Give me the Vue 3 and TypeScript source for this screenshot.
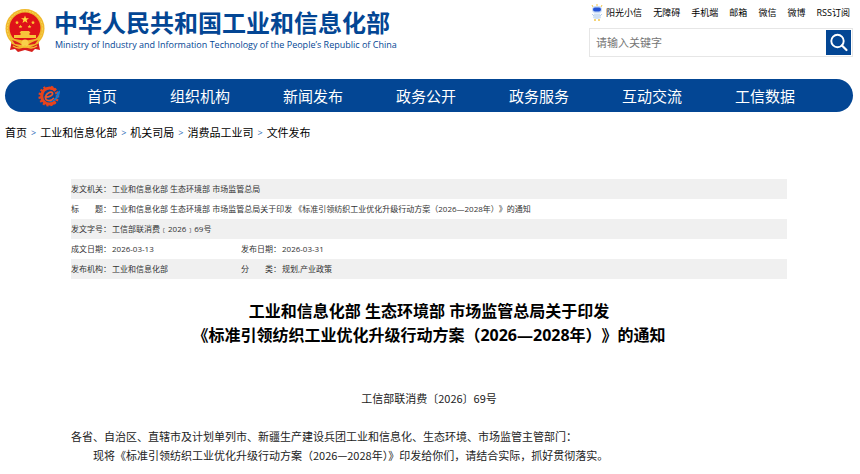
<script setup lang="ts">
interface InfoCell {
  label: string
  value: string
}

const quickLinks: string[] = ['阳光小信', '无障碍', '手机端', '邮箱', '微信', '微博', 'RSS订阅']
const navItems: string[] = ['首页', '组织机构', '新闻发布', '政务公开', '政务服务', '互动交流', '工信数据']
const crumbs: string[] = ['首页', '工业和信息化部', '机关司局', '消费品工业司', '文件发布']
const infoRows: InfoCell[][] = [
  [{ label: '发文机关：', value: '工业和信息化部 生态环境部 市场监管总局' }],
  [
    {
      label: '标　　题：',
      value: '工业和信息化部 生态环境部 市场监管总局关于印发 《标准引领纺织工业优化升级行动方案（2026—2028年）》的通知',
    },
  ],
  [{ label: '发文字号：', value: '工信部联消费﹝2026﹞69号' }],
  [
    { label: '成文日期：', value: '2026-03-13' },
    { label: '发布日期：', value: '2026-03-31' },
  ],
  [
    { label: '发布机构：', value: '工业和信息化部' },
    { label: '分　　类：', value: '规划,产业政策' },
  ],
]
const gearTeeth: number[] = Array.from({ length: 14 }, (_, i) => 20 + i * 24)
</script>

<template>
  <div class="page">
    <header class="header">
      <a class="brand" href="#">
        <svg class="emblem" viewBox="0 0 40 44" aria-hidden="true">
          <path d="M7 31 L5 41 L10 40 L13 43 L20 41 L27 43 L30 40 L35 41 L33 31 Z" fill="#d8201c" />
          <circle cx="20" cy="19.500" r="19.500" fill="#f0b92c" />
          <circle cx="20" cy="19.500" r="17.600" fill="none" stroke="#f9d85c" stroke-width="1" stroke-dasharray="2 1.200" />
          <circle cx="20" cy="19" r="15.500" fill="#df1219" />
          <path d="M20 6.500 L21 9.300 H24 L21.600 11.100 L22.500 14 L20 12.200 L17.500 14 L18.400 11.100 L16 9.300 H19 Z" fill="#ffdc3c" />
          <g fill="#fbc934">
            <path d="M12 11.500l.6 1.300 1.400.1-1.100.9.4 1.400-1.300-.8-1.200.8.300-1.400-1.100-.9 1.400-.1z" />
            <path d="M28 11.500l.6 1.300 1.400.1-1.100.9.4 1.400-1.300-.8-1.200.8.300-1.400-1.100-.9 1.400-.1z" />
            <path d="M15.500 15.800l.6 1.200 1.300.1-1 .9.3 1.300-1.200-.7-1.200.7.300-1.300-1-.9 1.300-.1z" />
            <path d="M24.500 15.800l.6 1.200 1.300.1-1 .9.3 1.300-1.200-.7-1.200.7.300-1.300-1-.9 1.300-.1z" />
          </g>
          <path d="M14.500 24 L16 22 H24 L25.500 24 L24.500 24 V26 H31 V29 H9 V26 H15.500 V24 Z" fill="#f7c33a" />
          <path d="M5 28 Q12 32 20 31 Q28 32 35 28 L33 35 Q26 38 20 36 Q14 38 7 35 Z" fill="#f0b92c" />
          <path d="M7 31 Q14 33 17 36 L10 35 Z M33 31 Q26 33 23 36 L30 35 Z" fill="#d8201c" />
          <circle cx="20" cy="34" r="3.500" fill="#f9d04a" />
          <path d="M8 37 Q14 41 20 37 Q26 41 32 37" fill="none" stroke="#f5c233" stroke-width="1.500" />
        </svg>
        <span class="brand-text">
          <span class="brand-name">中华人民共和国工业和信息化部</span>
          <span class="brand-sub">Ministry of Industry and Information Technology of the People’s Republic of China</span>
        </span>
      </a>

      <div class="tools">
        <div class="quick">
          <svg class="robot" viewBox="0 0 12 18" aria-hidden="true">
            <path d="M2 3 L1 1 M10 3 L11 1 M6 2 V0" stroke="#f2c64a" stroke-width="1" />
            <rect x="1" y="2" width="10" height="7" rx="3.500" fill="#c9dcf5" />
            <rect x="2" y="3.500" width="8" height="4" rx="2" fill="#2453d6" />
            <path d="M3 9.500 H9 L10 14 Q6 16 2 14 Z" fill="#cfe0f3" />
            <path d="M1 10 L3 12 M11 10 L9 12" stroke="#b5cdee" stroke-width="1" />
            <path d="M4 15 V17 M8 15 V17" stroke="#f2c64a" stroke-width="1.500" />
          </svg>
          <a v-for="link in quickLinks" :key="link" href="#">{{ link }}</a>
        </div>
        <form class="search" @submit.prevent>
          <input type="text" placeholder="请输入关键字" aria-label="请输入关键字" />
          <button type="submit" aria-label="搜索">
            <svg viewBox="0 0 25 25" aria-hidden="true">
              <circle cx="11.500" cy="11" r="6.200" fill="none" stroke="#fff" stroke-width="1.900" />
              <path d="M16 15.500 L20.500 20" stroke="#fff" stroke-width="2.200" stroke-linecap="round" />
            </svg>
          </button>
        </form>
      </div>
    </header>

    <nav class="nav">
      <svg class="gear" viewBox="0 0 24 22" aria-hidden="true">
        <g fill="#e8431c">
          <rect v-for="angle in gearTeeth" :key="angle" x="9.700" y="0.600" width="2.200" height="3.500" :transform="`rotate(${angle} 10.800 11)`" />
        </g>
        <path d="M17.500 5.500 A8 8 0 1 0 17.500 16.500" fill="none" stroke="#e8431c" stroke-width="3" />
        <path d="M9 16 C15 17 19.500 12.500 18.500 8 L22 5.500 C22.500 12 16 19.500 9 16 Z" fill="#1679cf" />
        <path d="M6.500 12 C11 12.500 15.500 10 14.500 8 C13 5.500 7.500 9 7.500 12.500 C7.500 16.500 13 16.500 16 13" fill="none" stroke="#f0562a" stroke-width="1.600" />
      </svg>
      <a v-for="item in navItems" :key="item" href="#">{{ item }}</a>
    </nav>

    <div class="crumbs">
      <template v-for="(crumb, i) in crumbs" :key="crumb">
        <span v-if="i > 0" class="sep">&gt;</span>
        <a href="#">{{ crumb }}</a>
      </template>
    </div>

    <main class="article">
      <table class="info">
        <colgroup>
          <col class="col-label" />
          <col class="col-value" />
          <col class="col-label" />
          <col />
        </colgroup>
        <tbody>
          <tr v-for="(row, r) in infoRows" :key="r">
            <template v-for="cell in row" :key="cell.label">
              <th scope="row">{{ cell.label }}</th>
              <td :colspan="row.length === 1 ? 3 : 1">{{ cell.value }}</td>
            </template>
          </tr>
        </tbody>
      </table>

      <h1>工业和信息化部 生态环境部 市场监管总局关于印发<br />《标准引领纺织工业优化升级行动方案（2026—2028年）》的通知</h1>

      <div class="body">
        <p class="number">工信部联消费〔2026〕69号</p>
        <p>各省、自治区、直辖市及计划单列市、新疆生产建设兵团工业和信息化、生态环境、市场监管主管部门：</p>
        <p class="indent">现将《标准引领纺织工业优化升级行动方案（2026—2028年）》印发给你们，请结合实际，抓好贯彻落实。</p>
      </div>
    </main>
  </div>
</template>

<style>
body {
  margin: 0;
  background: #fff;
}
</style>

<style scoped>
.page {
  padding: 0 7px 0 5px;
  color: #000;
  font-family: 'Open Sans', 'Noto Sans CJK SC', sans-serif;
}

a {
  color: inherit;
  text-decoration: none;
}

.header {
  display: flex;
  justify-content: space-between;
  align-items: flex-start;
  height: 79px;
}

.brand {
  display: flex;
  gap: 9px;
  padding-top: 9px;
  color: #034694;
}

.emblem {
  width: 40px;
  height: 44px;
}

.brand-text {
  display: flex;
  flex-direction: column;
  white-space: nowrap;
}

.brand-name {
  font-family: 'Liberation Sans', 'Noto Sans CJK SC', sans-serif;
  font-size: 24px;
  line-height: 30px;
  font-weight: 700;
}

.brand-sub {
  padding-left: 1px;
  font-size: 9px;
  line-height: 12px;
}

.tools {
  width: 264px;
}

.quick {
  display: flex;
  align-items: center;
  justify-content: space-between;
  height: 25px;
  padding: 0 3px 0 2px;
  font-size: 9px;
  white-space: nowrap;
}

.robot {
  width: 12px;
  height: 18px;
  margin-right: -8px;
}

.search {
  display: flex;
  box-sizing: border-box;
  height: 29px;
  margin-top: 3px;
  padding: 1px;
  border: 1px solid #e6e6e6;
}

.search input {
  flex: 1;
  min-width: 0;
  padding: 0 5px;
  border: 0;
  outline: 0;
  background: none;
  color: #333;
  font-family: inherit;
  font-size: 11px;
}

.search input::placeholder {
  color: #757575;
}

.search button {
  width: 25px;
  padding: 0;
  border: 0;
  background: #034694;
}

.search svg {
  display: block;
  width: 25px;
  height: 25px;
}

.nav {
  display: flex;
  align-items: center;
  gap: 53px;
  height: 33px;
  padding-left: 33px;
  border-radius: 17px;
  background: #034694;
  color: #fff;
  font-size: 15px;
  white-space: nowrap;
}

.gear {
  width: 24px;
  height: 22px;
  margin-right: -28px;
}

.crumbs {
  display: flex;
  gap: 4px;
  padding-top: 12px;
  font-size: 11px;
  line-height: 18px;
}

.sep {
  color: #2a6cb8;
  font-size: 9px;
}

.article {
  padding: 37px 66px 0;
}

.info {
  width: 100%;
  table-layout: fixed;
  border-collapse: collapse;
  color: #333;
  font-size: 8px;
  line-height: 20px;
  text-spacing-trim: space-all;
}

.col-label {
  width: 41px;
}

.col-value {
  width: 129px;
}

.info tr:nth-child(odd) {
  background: #f0f0f0;
}

.info th,
.info td {
  height: 20px;
  padding: 0;
  font-weight: 400;
  text-align: left;
  white-space: nowrap;
}

h1 {
  margin: 20px 0 42px;
  font-size: 16px;
  line-height: 24px;
  font-weight: 700;
  text-align: center;
  text-spacing-trim: space-all;
}

.body {
  color: #222;
  font-family: 'Noto Sans CJK SC', sans-serif;
  font-size: 11px;
  line-height: 19px;
}

.body p {
  margin: 0;
}

.body .number {
  margin-bottom: 19px;
  text-align: center;
}

.body .indent {
  text-indent: 2em;
}
</style>
